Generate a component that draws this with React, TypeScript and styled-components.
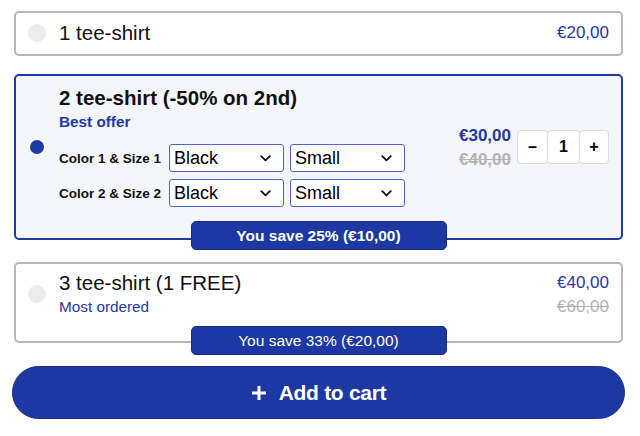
import { Fragment } from 'react';
import styled, { createGlobalStyle } from 'styled-components';

const BLUE = '#1f39a5';

const GlobalStyle = createGlobalStyle`
  body {
    margin: 0;
    background: #ffffff;
    font-family: "Liberation Sans", Arial, sans-serif;
    color: #111111;
  }
`;

const Page = styled.div`
  display: flex;
  flex-direction: column;
  gap: 18px;
  padding: 11px 15px 0 12px;
`;

const OfferCard = styled.div<{ $selected?: boolean; $badge?: boolean; $pad: string }>`
  position: relative;
  display: flex;
  align-items: center;
  gap: 13px;
  margin: 0 2px ${p => (p.$badge ? '4px' : '0')};
  padding: ${p => p.$pad};
  border: 2px solid ${p => (p.$selected ? BLUE : '#b7b7b7')};
  border-radius: 5px;
  background: ${p => (p.$selected ? '#f5f6fb' : '#ffffff')};
`;

const Radio = styled.span<{ $checked?: boolean }>`
  flex: none;
  width: 18px;
  height: 18px;
  box-sizing: border-box;
  border-radius: 50%;
  background: ${p => (p.$checked ? BLUE : '#ececec')};
  border: 2px solid ${p => (p.$checked ? '#ffffff' : '#ececec')};
`;

const Info = styled.div`
  flex: 1;
  min-width: 0;
`;

const Title = styled.div<{ $bold?: boolean }>`
  font-size: 20.5px;
  line-height: 24px;
  font-weight: ${p => (p.$bold ? 700 : 400)};
  white-space: nowrap;
`;

const Tag = styled.div<{ $bold?: boolean }>`
  margin-top: 3px;
  font-size: 15.3px;
  line-height: 18px;
  font-weight: ${p => (p.$bold ? 700 : 400)};
  color: ${BLUE};
`;

const Variants = styled.div`
  display: grid;
  grid-template-columns: 104px 115px 115px;
  column-gap: 6px;
  row-gap: 7px;
  align-items: center;
  margin-top: 13px;
`;

const VariantLabel = styled.span`
  font-size: 13.5px;
  font-weight: 700;
  white-space: nowrap;
`;

const SelectBox = styled.div`
  display: flex;
  align-items: center;
  justify-content: space-between;
  height: 28px;
  box-sizing: border-box;
  padding: 0 12px 0 4px;
  border: 1.5px solid #4c65c8;
  border-radius: 3px;
  background: #ffffff;
  font-size: 18px;
  color: #000000;
`;

const Right = styled.div`
  display: flex;
  align-items: center;
  gap: 6px;
`;

const PriceCol = styled.div`
  display: flex;
  flex-direction: column;
  align-items: flex-end;
  align-self: flex-start;
`;

const Price = styled.span<{ $bold?: boolean }>`
  font-size: 17px;
  line-height: 24px;
  font-weight: ${p => (p.$bold ? 700 : 400)};
  color: ${BLUE};
`;

const OldPrice = styled.span<{ $bold?: boolean }>`
  margin-top: 3px;
  font-size: 17px;
  line-height: 18px;
  font-weight: ${p => (p.$bold ? 700 : 400)};
  color: #b3b3b3;
  text-decoration: line-through;
`;

const Stepper = styled.div`
  display: flex;
  height: 34px;
`;

const StepCell = styled.button<{ $w: number }>`
  width: ${p => p.$w}px;
  height: 34px;
  margin-left: -1px;
  padding: 0;
  border: 1px solid #dcdcdc;
  border-radius: 4px;
  background: #ffffff;
  font-family: inherit;
  font-size: 16px;
  font-weight: 700;
  color: #000000;
  &:first-child {
    margin-left: 0;
  }
`;

const Badge = styled.div<{ $bold?: boolean; $drop: number }>`
  position: absolute;
  left: 50%;
  bottom: -${p => p.$drop}px;
  transform: translateX(-50%);
  width: 256px;
  height: 29px;
  box-sizing: border-box;
  border: 1px solid #142b8a;
  border-radius: 5px;
  background: #1e38a3;
  color: #ffffff;
  font-size: 15.5px;
  line-height: 27px;
  font-weight: ${p => (p.$bold ? 700 : 400)};
  text-align: center;
`;

const AddButton = styled.button`
  display: flex;
  align-items: center;
  justify-content: center;
  gap: 12px;
  height: 53px;
  margin-top: 1px;
  border: 1px solid #17308f;
  border-radius: 27px;
  background: #1e38a3;
  color: #ffffff;
  font-family: inherit;
  font-size: 21px;
  font-weight: 700;
  letter-spacing: -0.3px;
`;

const Chevron = () => (
  <svg width="11" height="7" viewBox="0 0 11 7" fill="none">
    <path d="M1.2 1.2 5.5 5.4 9.8 1.2" stroke="#111" strokeWidth="1.8" strokeLinecap="round" strokeLinejoin="round" />
  </svg>
);

const PlusIcon = () => (
  <svg width="16" height="16" viewBox="0 0 16 16" fill="none">
    <path d="M8 1v14M1 8h14" stroke="#fff" strokeWidth="3" />
  </svg>
);

const variants = [
  { label: 'Color 1 & Size 1', color: 'Black', size: 'Small' },
  { label: 'Color 2 & Size 2', color: 'Black', size: 'Small' },
];

export default function App() {
  return (
    <>
      <GlobalStyle />
      <Page>
        <OfferCard $pad="8px 12px 9px">
          <Radio />
          <Info>
            <Title>1 tee-shirt</Title>
          </Info>
          <Price>€20,00</Price>
        </OfferCard>

        <OfferCard $selected $badge $pad="10px 12px 31px">
          <Radio $checked />
          <Info>
            <Title $bold>2 tee-shirt (-50% on 2nd)</Title>
            <Tag $bold>Best offer</Tag>
            <Variants>
              {variants.map(v => (
                <Fragment key={v.label}>
                  <VariantLabel>{v.label}</VariantLabel>
                  <SelectBox>
                    {v.color}
                    <Chevron />
                  </SelectBox>
                  <SelectBox>
                    {v.size}
                    <Chevron />
                  </SelectBox>
                </Fragment>
              ))}
            </Variants>
          </Info>
          <Right>
            <PriceCol>
              <Price $bold>€30,00</Price>
              <OldPrice $bold>€40,00</OldPrice>
            </PriceCol>
            <Stepper>
              <StepCell $w={31}>–</StepCell>
              <StepCell $w={33}>1</StepCell>
              <StepCell $w={30}>+</StepCell>
            </Stepper>
          </Right>
          <Badge $bold $drop={12}>You save 25% (€10,00)</Badge>
        </OfferCard>

        <OfferCard $badge $pad="7px 12px 25px">
          <Radio />
          <Info>
            <Title>3 tee-shirt (1 FREE)</Title>
            <Tag>Most ordered</Tag>
          </Info>
          <PriceCol>
            <Price>€40,00</Price>
            <OldPrice>€60,00</OldPrice>
          </PriceCol>
          <Badge $drop={14}>You save 33% (€20,00)</Badge>
        </OfferCard>

        <AddButton>
          <PlusIcon />
          Add to cart
        </AddButton>
      </Page>
    </>
  );
}
